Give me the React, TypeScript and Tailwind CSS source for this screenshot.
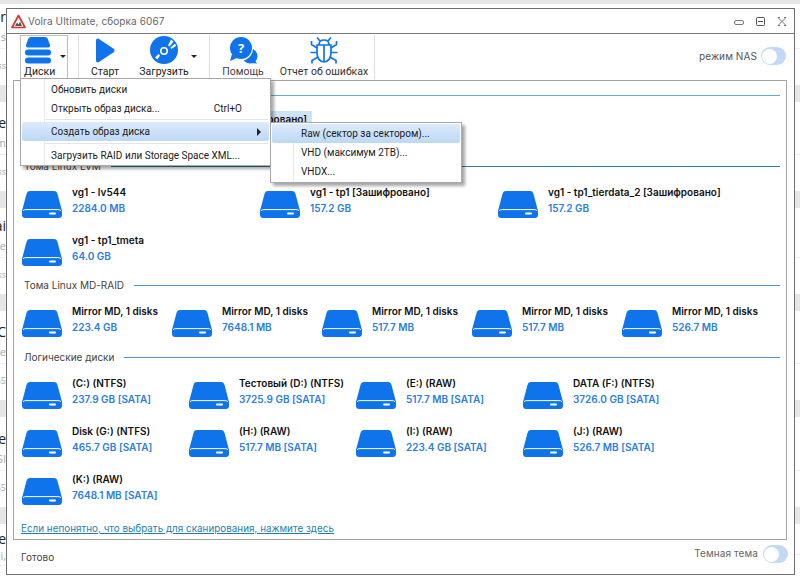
const BLUE = "#0f74ec";

const stripRows = [
  { label: "er", sub: "l s", small: "ss", h: "h-[106px]" },
  { label: "e", sub: "m", small: "ss", h: "h-[103px]" },
  { label: "ai", sub: "e", small: "ss", h: "h-[106px]" },
  { label: "C", sub: "e", small: "55", h: "h-[107px]" },
  { label: "e", sub: "SI", small: "55", h: "h-[104px]" },
  { label: "e", sub: "i,", small: "", h: "h-[60px]" },
];

const lvmDisks = [
  { name: "vg1 - lv544", size: "2284.0 MB" },
  { name: "vg1 - tp1 [Зашифровано]", size: "157.2 GB" },
  { name: "vg1 - tp1_tierdata_2 [Зашифровано]", size: "157.2 GB" },
  { name: "vg1 - tp1_tmeta", size: "64.0 GB" },
];

const mdDisks = [
  { name: "Mirror MD, 1 disks", size: "223.4 GB" },
  { name: "Mirror MD, 1 disks", size: "7648.1 MB" },
  { name: "Mirror MD, 1 disks", size: "517.7 MB" },
  { name: "Mirror MD, 1 disks", size: "517.7 MB" },
  { name: "Mirror MD, 1 disks", size: "526.7 MB" },
];

const logicalDisks = [
  { name: "(C:) (NTFS)", size: "237.9 GB [SATA]" },
  { name: "Тестовый (D:) (NTFS)", size: "3725.9 GB [SATA]" },
  { name: "(E:) (RAW)", size: "517.7 MB [SATA]" },
  { name: "DATA (F:) (NTFS)", size: "3726.0 GB [SATA]" },
  { name: "Disk (G:) (NTFS)", size: "465.7 GB [SATA]" },
  { name: "(H:) (RAW)", size: "517.7 MB [SATA]" },
  { name: "(I:) (RAW)", size: "223.4 GB [SATA]" },
  { name: "(J:) (RAW)", size: "526.7 MB [SATA]" },
  { name: "(K:) (RAW)", size: "7648.1 MB [SATA]" },
];

function DiskIcon() {
  return (
    <svg width="40" height="27" viewBox="0 0 40 27" className="mt-[7px] shrink-0">
      <path
        d="M8 0H32C34 0 35 1 35.5 3L39.5 18C40 19 40 20 40 22V24C40 26 38.5 27 37 27H3C1.5 27 0 26 0 24V22C0 20 0 19 .5 18L4.5 3C5 1 6 0 8 0Z"
        fill={BLUE}
      />
      <path d="M1 19.6C2 18.8 3 18.6 4 18.6H36C37 18.6 38 18.8 39 19.6" stroke="#fff" strokeWidth="1" fill="none" />
      <rect x="27" y="21.4" width="7" height="2" rx="1" fill="#fff" />
    </svg>
  );
}

function Disk({ name, size }: { name: string; size: string }) {
  return (
    <div className="flex h-[34px] gap-[10px]">
      <DiskIcon />
      <div className="whitespace-nowrap text-[10px] font-semibold leading-[16px]">
        <div className="text-[#111]">{name}</div>
        <div className="text-[#2a7de1]">{size}</div>
      </div>
    </div>
  );
}

function SectionHeader({ title, line = "bg-[#4a94d8]" }: { title?: string; line?: string }) {
  return (
    <div className="flex h-4 items-center gap-[10px] pl-[10px] pr-[5px] text-[10px] text-[#444]">
      {title && <span className="whitespace-nowrap">{title}</span>}
      <div className={`h-px flex-1 ${line}`} />
    </div>
  );
}

function Toggle() {
  return (
    <div className="flex h-[18px] w-[25px] items-center rounded-full bg-[#c3d8f3] pl-px">
      <div className="h-[15px] w-[15px] rounded-full bg-white" />
    </div>
  );
}

function Caret() {
  return <div className="h-0 w-0 border-x-[3px] border-t-[3px] border-x-transparent border-t-[#222]" />;
}

function BackdropStrip({ left }: { left?: boolean }) {
  return (
    <div className="flex w-full flex-col overflow-hidden font-['Open_Sans',sans-serif]">
      {stripRows.map((r, i) => (
        <div key={i} className={`${r.h} flex shrink-0 flex-col`}>
          <div className="flex h-[22px] items-end justify-end whitespace-nowrap text-[14px] leading-[18px] text-[#222]">
            {left ? r.label : ""}
          </div>
          <div className="flex h-[22px] items-center justify-end whitespace-nowrap text-[11px] text-[#aaa]">
            {left ? r.sub : ""}
          </div>
          <div className="flex h-[24px] items-end justify-end whitespace-nowrap border-t border-[#eee] text-[9px] text-[#aaa]">
            {left ? r.small : ""}
          </div>
          <div className="mt-[13px] h-[17px] bg-[#e6e6e6]" />
        </div>
      ))}
    </div>
  );
}

function MenuItem({ label, hint, active, arrow }: { label: string; hint?: string; active?: boolean; arrow?: boolean }) {
  return (
    <div
      className={`mx-px flex h-[19px] items-center justify-between whitespace-nowrap rounded-[2px] pl-[29px] pr-[8px] ${
        active ? "bg-gradient-to-b from-[#dcebfb] to-[#bcd8f6]" : ""
      }`}
    >
      <span>{label}</span>
      {hint && <span className="mr-[19px]">{hint}</span>}
      {arrow && <div className="h-0 w-0 border-y-[4px] border-l-[4px] border-y-transparent border-l-[#222]" />}
    </div>
  );
}

function DisksMenu() {
  return (
    <div className="absolute left-[13px] top-[44px] z-20 h-[88px] w-[251px] border border-[#a8a8a8] bg-white py-px font-['Roboto',sans-serif] text-[10px] text-[#1c1c1c] shadow-[3px_3px_3px_rgba(0,0,0,0.35)]">
      <div className="absolute bottom-0 left-[23px] top-0 w-px bg-[#e8e8e8]" />
      <div className="relative">
        <MenuItem label="Обновить диски" />
        <MenuItem label="Открыть образ диска..." hint="Ctrl+O" />
        <div className="ml-[24px] mr-[2px] mt-px h-px bg-[#e4e4e4]" />
        <div className="mt-[2px]">
          <MenuItem label="Создать образ диска" active arrow />
        </div>
        <div className="ml-[24px] mr-[2px] mt-[2px] h-px bg-[#e4e4e4]" />
        <div className="mt-[2px]">
          <MenuItem label="Загрузить RAID или Storage Space XML..." />
        </div>
      </div>
      <div className="absolute left-[249px] top-[43px] h-[61px] w-[192px] border border-[#a8a8a8] bg-white pt-px shadow-[3px_3px_3px_rgba(0,0,0,0.35)]">
        <div className="absolute bottom-0 left-[22px] top-0 w-px bg-[#e8e8e8]" />
        <div className="relative">
          <MenuItem label="Raw (сектор за сектором)..." active />
          <MenuItem label="VHD (максимум 2TB)..." />
          <MenuItem label="VHDX..." />
        </div>
      </div>
    </div>
  );
}

function Toolbar() {
  return (
    <div className="relative flex h-[46px] shrink-0 items-start whitespace-nowrap pl-[13px] font-['Roboto',sans-serif] text-[10.5px] text-[#222]">
      <div className="mt-px flex h-[45px] w-[48px] flex-col border border-b-0 border-[#bdbdbd]">
        <svg width="26" height="27" viewBox="0 0 26 27" className="ml-[4px] mt-px">
          <path d="M6 0H20C21.5 0 22.5 1 23 2.5L25 8C25.5 9.5 24.5 10.5 23 10.5H3C1.5 10.5 .5 9.5 1 8L3 2.5C3.5 1 4.5 0 6 0Z" fill={BLUE} />
          <rect x="0" y="12.5" width="26" height="6" rx="3" fill={BLUE} />
          <rect x="0" y="20.5" width="26" height="6" rx="3" fill={BLUE} />
        </svg>
        <div className="absolute left-[53px] top-[21px]">
          <Caret />
        </div>
        <div className="ml-[3px] w-[30px] text-center leading-[15px]">Диски</div>
      </div>
      <div className="ml-[10px] mt-px h-[44px] w-px bg-[#dcdcdc]" />
      <div className="flex w-[52px] flex-col items-center pt-[4px]">
        <svg width="20" height="25" viewBox="0 0 20 25">
          <path d="M1 2.5C1 .8 2.6 0 4 .9L18.6 10.8C20 11.8 20 13.2 18.6 14.2L4 24.1C2.6 25 1 24.2 1 22.5Z" fill={BLUE} />
        </svg>
        <div className="mt-px leading-[15px]">Старт</div>
      </div>
      <div className="ml-[3px] flex w-[60px] flex-col items-center pt-[2px]">
        <svg width="28" height="28" viewBox="0 0 28 28">
          <circle cx="14" cy="14" r="14" fill={BLUE} />
          <circle cx="14" cy="15" r="3.2" fill="none" stroke="#fff" strokeWidth="1.6" />
          <path d="M18 9.5L21 3.5L23.5 5.5L19.5 10.5Z" fill="#fff" />
          <path d="M20.5 11.5L25 7.5L26 10L21.2 13Z" fill="#fff" />
          <path d="M10 19.5L7.5 23.5L5 21.5L8.5 18Z" fill="#fff" />
        </svg>
        <div className="leading-[15px]">Загрузить</div>
      </div>
      <div className="-ml-[3px] mt-[21px]">
        <Caret />
      </div>
      <div className="ml-[12px] mt-px h-[44px] w-px bg-[#dcdcdc]" />
      <div className="flex w-[66px] flex-col items-center pt-[3px]">
        <svg width="29" height="27" viewBox="0 0 29 27">
          <circle cx="21" cy="19" r="7.6" fill={BLUE} />
          <path d="M21 26L28 26.5L25 22Z" fill={BLUE} />
          <circle cx="12" cy="11.5" r="12" fill="#fff" />
          <circle cx="12" cy="11" r="11" fill={BLUE} />
          <path d="M3 17L1 24L9 20.5Z" fill={BLUE} />
          <text x="12" y="15.5" textAnchor="middle" fontSize="13" fontWeight="700" fill="#fff" fontFamily="Open Sans, sans-serif">
            ?
          </text>
        </svg>
        <div className="leading-[15px] text-[#444]">Помощь</div>
      </div>
      <div className="flex w-[96px] flex-col items-center pt-[3px]">
        <svg width="28" height="27" viewBox="0 0 28 27" fill="none" stroke={BLUE} strokeWidth="1.7">
          <path d="M9 8C9 4.5 11 3 14 3C17 3 19 4.5 19 8" />
          <path d="M7 8H21V16C21 21 18 25 14 25C10 25 7 21 7 16Z" />
          <path d="M14 8V25" />
          <path d="M10 4L7 .5M18 4L21 .5" />
          <path d="M7 11L1.5 7.5V4M21 11L26.5 7.5V4" />
          <path d="M7 15.5H.5M21 15.5H27.5" />
          <path d="M8 20L2 23.5V26.5M20 20L26 23.5V26.5" />
        </svg>
        <div className="leading-[15px] text-[#333]">Отчет об ошибках</div>
      </div>
      <div className="ml-[2px] mt-px h-[44px] w-px bg-[#dcdcdc]" />
      <div className="ml-auto mr-[8px] mt-[13px] flex items-center gap-[4px] text-[#555]">
        <span className="font-['Inter',sans-serif] text-[10px] tracking-[0.1px]">режим NAS</span>
        <Toggle />
      </div>
      <DisksMenu />
    </div>
  );
}

export default function App() {
  return (
    <div className="h-[579px] w-[800px] overflow-hidden bg-white">
      <div className="h-[4px] bg-[#e6e6e6]" />
      <div className="flex">
        <div className="w-[6px] shrink-0">
          <BackdropStrip left />
        </div>
        <div className="mt-[4px] flex h-[567px] w-[789px] shrink-0 flex-col border border-[#6e6e6e] bg-white font-['Inter',sans-serif]">
          {/* Title bar */}
          <div className="flex h-[25px] shrink-0 items-center border-b border-[#7a7a7a] pl-[4px] pr-[7px]">
            <svg width="15" height="15" viewBox="0 0 15 15" className="mt-px">
              <path d="M7.5 1.5L14 13.5H1Z" fill="#fff" stroke="#d8352a" strokeWidth="1.7" strokeLinejoin="round" />
              <path d="M4 12L6 8.5L7.5 10.5L9 7.5L11 12Z" fill="#555" />
            </svg>
            <span className="ml-[2px] text-[10px] tracking-[0.1px] text-[#666]">Volra Ultimate, сборка 6067</span>
            <div className="ml-auto flex items-center gap-[12px]">
              <svg width="10" height="5" viewBox="0 0 10 5" className="mt-[2px]">
                <rect x=".5" y=".5" width="9" height="4" rx="1.5" fill="none" stroke="#777" />
              </svg>
              <svg width="9" height="9" viewBox="0 0 9 9">
                <rect x=".5" y=".5" width="8" height="8" rx="1" fill="none" stroke="#555" />
                <path d="M2 4.5H7" stroke="#555" />
              </svg>
              <svg width="10" height="9" viewBox="0 0 10 9" fill="none" stroke="#777">
                <path d="M1 .5L9 8.5M9 .5L1 8.5M1 .5H3M7 .5H9M1 8.5H3M7 8.5H9" />
              </svg>
            </div>
          </div>

          <Toolbar />

          {/* Disk list */}
          <div className="mb-px ml-[6px] mr-[7px] flex h-[460px] flex-col border border-[#a3a3a3] pl-[8px] pr-[1px] pt-[6px]">
            <div className="-ml-[8px] h-[71px] shrink-0">
              <SectionHeader line="bg-[#62abe0]" />
              <div className="ml-[72px] mt-[8px] h-[17px] w-[226px] whitespace-nowrap bg-[#cfe3f7] pr-[5px] text-right text-[10px] font-semibold leading-[17px] text-[#111]">
                [Зашифровано]
              </div>
            </div>
            <div className="-ml-[8px]">
              <SectionHeader title="Тома Linux LVM" line="bg-[#2f7aa8]" />
            </div>
            <div className="mt-[10px] grid grid-cols-[238px_238px_238px] gap-y-[14px]">
              {lvmDisks.map((d) => (
                <Disk key={d.name} {...d} />
              ))}
            </div>
            <div className="-ml-[8px] mt-[11px]">
              <SectionHeader title="Тома Linux MD-RAID" />
            </div>
            <div className="mt-[10px] grid grid-cols-[150px_150px_150px_150px_150px]">
              {mdDisks.map((d, i) => (
                <Disk key={i} {...d} />
              ))}
            </div>
            <div className="-ml-[8px] mt-[12px]">
              <SectionHeader title="Логические диски" />
            </div>
            <div className="mt-[10px] grid grid-cols-[167px_167px_167px_167px] gap-y-[14px]">
              {logicalDisks.map((d) => (
                <Disk key={d.name} {...d} />
              ))}
            </div>
            <a className="-ml-[1px] mb-[3px] mt-auto text-[9.9px] leading-[16px] text-[#1f7fae] underline">
              Если непонятно, что выбрать для сканирования, нажмите здесь
            </a>
          </div>

          {/* Status bar */}
          <div className="flex flex-1 justify-between pl-[14px] pr-[6px] text-[10px]">
            <span className="mt-[9px] text-[#444]">Готово</span>
            <div className="mt-[4px] flex items-start gap-[5px] text-[#666]">
              <span className="mt-px tracking-[0.1px]">Темная тема</span>
              <Toggle />
            </div>
          </div>
        </div>
        <div className="w-[5px] shrink-0">
          <BackdropStrip />
        </div>
      </div>
    </div>
  );
}
